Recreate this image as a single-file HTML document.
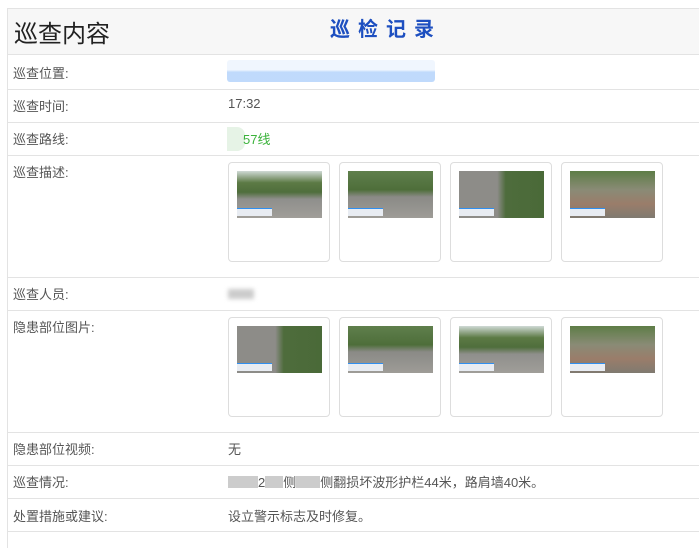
<!DOCTYPE html>
<html><head><meta charset="utf-8"><style>
*{margin:0;padding:0;box-sizing:border-box}
body{width:699px;height:534px;background:#fff;font-family:"Liberation Sans","Noto Sans CJK SC",sans-serif;position:relative;overflow:hidden;color:#555}
.frame{position:absolute;left:7px;top:8px;width:700px;height:540px;border-left:1px solid #e3e3e3;border-top:1px solid #e3e3e3}
.hdr{position:absolute;left:8px;top:9px;width:691px;height:46px;background:#f7f7f7;border-bottom:1px solid #e3e3e3}
.hdr .t{position:absolute;left:6px;top:5px;font-size:24px;color:#222}
.hdr .r{position:absolute;left:322px;top:4px;font-size:20px;font-weight:bold;color:#1d4fc0;letter-spacing:8px}
.line{position:absolute;left:8px;width:691px;height:1px;background:#e3e3e3}
.lab{position:absolute;left:13px;font-size:13px;color:#555}
.val{position:absolute;left:228px;font-size:13px;color:#555}
.card{position:absolute;width:102px;height:100px;border:1px solid #ddd;border-radius:4px;background:#fff}
.img{position:absolute;left:8px;top:8px;width:85px;height:47px;background:linear-gradient(180deg,#cfd9d5 0%,#5c7a45 25%,#4f6e3c 45%,#8f8f8c 60%,#a09e99 100%)}
.img.b{background:linear-gradient(180deg,#5f7f4c 0%,#4e6e3a 40%,#8a8a86 55%,#9e9c97 100%)}
.img.c{background:linear-gradient(90deg,#8d8c88 0%,#8d8c88 45%,#4e6c3c 55%,#4a6a38 100%)}
.img.d{background:linear-gradient(180deg,#5e7d47 0%,#8a8b76 40%,#9a7d6a 70%,#7f7a70 100%)}
.img i{position:absolute;left:0;bottom:2px;width:35px;height:8px;background:#e8ecf2;border-top:1px solid #2f8ff0}
</style></head><body>
<div class="frame"></div>
<div class="hdr"><div class="t">巡查内容</div><div class="r">巡检记录</div></div>

<div class="lab" style="top:63px">巡查位置:</div>
<div style="position:absolute;left:227px;top:60px;width:208px;height:22px;background:linear-gradient(180deg,#eef5fe 0%,#eef5fe 45%,#b9d6fb 55%,#b9d6fb 100%);border-radius:3px;opacity:.9"></div>
<div class="line" style="top:89px"></div>
<div class="lab" style="top:96px">巡查时间:</div><div class="val" style="top:96px">17:32</div>
<div class="line" style="top:122px"></div>
<div class="lab" style="top:129px">巡查路线:</div>
<div style="position:absolute;left:227px;top:127px;width:18px;height:24px;background:#e6f3e6;border-radius:0 8px 8px 0"></div>
<div class="val" style="top:129px;left:243px;color:#3bb33b">57线</div>
<div class="line" style="top:155px"></div>
<div class="lab" style="top:162px">巡查描述:</div>
<div class="card" style="left:228px;top:162px"><div class="img"><i></i></div></div>
<div class="card" style="left:339px;top:162px"><div class="img b"><i></i></div></div>
<div class="card" style="left:450px;top:162px"><div class="img c"><i></i></div></div>
<div class="card" style="left:561px;top:162px"><div class="img d"><i></i></div></div>
<div class="line" style="top:277px"></div>
<div class="lab" style="top:284px">巡查人员:</div>
<div style="position:absolute;left:228px;top:289px;width:26px;height:10px;background:#ccc;filter:blur(2px)"></div>
<div class="line" style="top:310px"></div>
<div class="lab" style="top:317px">隐患部位图片:</div>
<div class="card" style="left:228px;top:317px"><div class="img c"><i></i></div></div>
<div class="card" style="left:339px;top:317px"><div class="img b"><i></i></div></div>
<div class="card" style="left:450px;top:317px"><div class="img"><i></i></div></div>
<div class="card" style="left:561px;top:317px"><div class="img d"><i></i></div></div>
<div class="line" style="top:432px"></div>
<div class="lab" style="top:439px">隐患部位视频:</div><div class="val" style="top:439px">无</div>
<div class="line" style="top:465px"></div>
<div class="lab" style="top:472px">巡查情况:</div>
<div class="val" style="top:472px;left:228px;color:#555"><span style="display:inline-block;width:30px;height:12px;background:#ccc;vertical-align:-1px"></span>2<span style="display:inline-block;width:18px;height:12px;background:#ccc;vertical-align:-1px"></span>侧<span style="display:inline-block;width:24px;height:12px;background:#ccc;vertical-align:-1px"></span>侧翻损坏波形护栏44米，路肩墙40米。</div>
<div class="line" style="top:498px"></div>
<div class="lab" style="top:506px">处置措施或建议:</div><div class="val" style="top:506px">设立警示标志及时修复。</div>
<div class="line" style="top:531px"></div>
</body></html>
